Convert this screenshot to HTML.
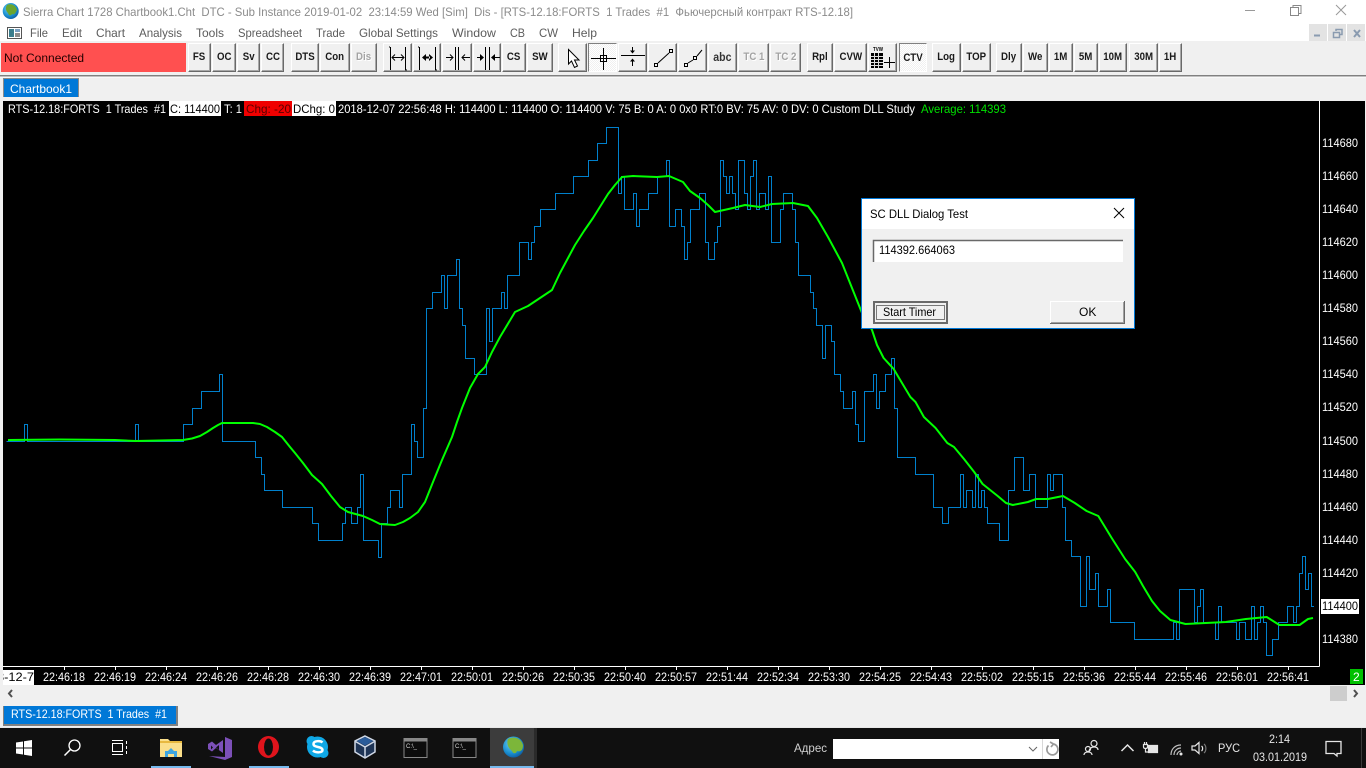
<!DOCTYPE html>
<html><head><meta charset="utf-8"><title>Sierra Chart</title>
<style>
html,body{margin:0;padding:0;width:1366px;height:768px;overflow:hidden;background:#f0f0f0}
.b{position:absolute;top:43px;height:29px;box-sizing:border-box;background:#f0f0f0;border:1px solid;border-color:#fff #696969 #696969 #fff;box-shadow:inset -1px -1px 0 #a8a8a8;font:bold 11px "Liberation Sans",sans-serif;text-align:center;line-height:27px;color:#1a1a1a;white-space:nowrap;overflow:hidden}
.b span{display:inline-block;transform:scaleX(.88)}
.d{color:#a3a3a3;text-shadow:1px 1px 0 #fff}
.p{background-color:#fafafa;border-color:#808080 #fff #fff #808080;box-shadow:none;background-image:repeating-conic-gradient(#f0f0f0 0 25%,#fff 0 50%);background-size:2px 2px}
svg{position:absolute;left:0;top:0}
text{font-family:"Liberation Sans","Noto Sans CJK JP",sans-serif;font-size:12px;white-space:pre}
</style></head><body>
<div class="b" style="left:188px;width:23px"><span>FS</span></div>
<div class="b" style="left:212px;width:24px"><span>OC</span></div>
<div class="b" style="left:237px;width:23px"><span>Sv</span></div>
<div class="b" style="left:261px;width:23px"><span>CC</span></div>
<div class="b" style="left:291px;width:28px"><span>DTS</span></div>
<div class="b" style="left:320px;width:30px"><span>Con</span></div>
<div class="b d" style="left:351px;width:26px"><span>Dis</span></div>
<div class="b" style="left:383px;width:29px"></div>
<div class="b" style="left:413px;width:28px"></div>
<div class="b" style="left:442px;width:30px"></div>
<div class="b" style="left:473px;width:28px"></div>
<div class="b" style="left:502px;width:24px"><span>CS</span></div>
<div class="b" style="left:527px;width:26px"><span>SW</span></div>
<div class="b" style="left:558px;width:29px"></div>
<div class="b p" style="left:588px;width:29px"></div>
<div class="b" style="left:618px;width:29px"></div>
<div class="b" style="left:648px;width:29px"></div>
<div class="b" style="left:678px;width:29px"></div>
<div class="b" style="left:708px;width:29px;font-size:12px;font-weight:normal;color:#333"><span style="font-weight:bold">abc</span></div>
<div class="b d" style="left:738px;width:31px"><span>TC 1</span></div>
<div class="b d" style="left:770px;width:31px"><span>TC 2</span></div>
<div class="b" style="left:807px;width:26px"><span>Rpl</span></div>
<div class="b" style="left:834px;width:33px"><span>CVW</span></div>
<div class="b" style="left:868px;width:29px"></div>
<div class="b p" style="left:899px;width:28px;line-height:29px"><span>CTV</span></div>
<div class="b" style="left:932px;width:29px"><span>Log</span></div>
<div class="b" style="left:962px;width:29px"><span>TOP</span></div>
<div class="b" style="left:996px;width:26px"><span>Dly</span></div>
<div class="b" style="left:1023px;width:25px"><span>We</span></div>
<div class="b" style="left:1049px;width:24px"><span>1M</span></div>
<div class="b" style="left:1074px;width:24px"><span>5M</span></div>
<div class="b" style="left:1099px;width:28px"><span>10M</span></div>
<div class="b" style="left:1129px;width:29px"><span>30M</span></div>
<div class="b" style="left:1159px;width:23px"><span>1H</span></div>

<svg width="1366" height="768" viewBox="0 0 1366 768" xmlns="http://www.w3.org/2000/svg">
<defs>
<radialGradient id="gl" cx=".4" cy=".35" r=".75"><stop offset="0" stop-color="#6fd0f0"/><stop offset=".6" stop-color="#1a8fd0"/><stop offset="1" stop-color="#0b4f96"/></radialGradient>
</defs>
<!-- title + menu -->
<rect x="0" y="0" width="1366" height="41" fill="#fff"/>
<circle cx="10.7" cy="11" r="8" fill="url(#gl)"/>
<path d="M7 5c4-2 9 0 10 5-2 4-3 5-5 4-1 2-3 2-4-1-2-2-3-5-1-8z" fill="#6aa52e"/>
<text x="23" y="16" fill="#8b8b8b" textLength="830" lengthAdjust="spacingAndGlyphs">Sierra Chart 1728 Chartbook1.Cht  DTC - Sub Instance 2019-01-02  23:14:59 Wed [Sim]  Dis - [RTS-12.18:FORTS  1 Trades  #1  Фьючерсный контракт RTS-12.18]</text>
<path d="M1245 10.500H1255" stroke="#999" fill="none"/>
<path d="M1290.500 7.500h8v8h-8zM1293 7.500V5.500h8v8h-2.500" stroke="#888" fill="none"/>
<path d="M1336 5l10 10M1346 5l-10 10" stroke="#999" fill="none"/>
<rect x="7.500" y="27.500" width="14" height="11" fill="#fff" stroke="#555"/>
<rect x="9" y="29" width="5" height="8" fill="#3a7d8c"/><rect x="15" y="29" width="5" height="3" fill="#7a9fc0"/><rect x="15" y="33" width="5" height="4" fill="#8c8c8c"/>
<g fill="#5c5c5c">
<text x="30" y="37" textLength="18" lengthAdjust="spacingAndGlyphs">File</text>
<text x="62" y="37" textLength="20" lengthAdjust="spacingAndGlyphs">Edit</text>
<text x="96" y="37" textLength="29" lengthAdjust="spacingAndGlyphs">Chart</text>
<text x="139" y="37" textLength="43" lengthAdjust="spacingAndGlyphs">Analysis</text>
<text x="196" y="37" textLength="28" lengthAdjust="spacingAndGlyphs">Tools</text>
<text x="238" y="37" textLength="64" lengthAdjust="spacingAndGlyphs">Spreadsheet</text>
<text x="316" y="37" textLength="29" lengthAdjust="spacingAndGlyphs">Trade</text>
<text x="359" y="37" textLength="79" lengthAdjust="spacingAndGlyphs">Global Settings</text>
<text x="452" y="37" textLength="44" lengthAdjust="spacingAndGlyphs">Window</text>
<text x="510" y="37" textLength="15" lengthAdjust="spacingAndGlyphs">CB</text>
<text x="539" y="37" textLength="19" lengthAdjust="spacingAndGlyphs">CW</text>
<text x="572" y="37" textLength="25" lengthAdjust="spacingAndGlyphs">Help</text>
</g>
<rect x="1309" y="24" width="18" height="17" fill="#e3e3e3"/><rect x="1328" y="24" width="18" height="17" fill="#e3e3e3"/><rect x="1347" y="24" width="18" height="17" fill="#e3e3e3"/>
<path d="M1314 35.500h6" stroke="#8a9bb0" stroke-width="2" fill="none"/>
<path d="M1333.500 32.500h6v5h-6zM1336 31v-1.500h6v5h-2" stroke="#8a9bb0" stroke-width="1.500" fill="none"/>
<path d="M1354 30l6 7M1360 30l-6 7" stroke="#8a9bb0" stroke-width="2" fill="none"/>
<!-- status -->
<rect x="1" y="43" width="185" height="29" fill="#ff5050"/>
<text x="4" y="62" fill="#200">Not Connected</text>
<!-- toolbar icons -->
<g stroke="#000" fill="none" shape-rendering="crispEdges">
<path d="M390.500 47V70M389 47h1M405.500 47V70M405 70h2M392 57.500H404"/>
<path d="M419.500 47V70M418 47h1M435.500 47V70M435 70h2"/>
<path d="M446 57.500h7M455.500 47V70M458.500 47V70M462 57.500h8"/>
<path d="M477 57.500h6M485.500 47V70M489.500 47V70M493 57.500h7"/>
<path d="M591 58.500H616M603.500 48V70" />
<rect x="600.500" y="55.500" width="6" height="6"/>
<path d="M621 55.500H645M632.500 47V53M632.500 59V66"/>
</g>
<g fill="none" stroke="#000">
<path d="M395 54.500l-3 3 3 3M401 54.500l3 3-3 3"/>
<path d="M450 54.500l3 3-3 3M465 54.500l-3 3 3 3"/>
</g>
<g fill="#000">
<path d="M422 57.500l4-3.500v7zM433 57.500l-4-3.500v7zM425 56.500h5v2h-5z"/>
<path d="M484 57.500l-4-3.500v7zM491 57.500l4-3.500v7z"/>
<path d="M632.500 53.500l-2.500-3h5zM632.500 58.500l-2.500 3h5z"/>
</g>
<path d="M568.500 49.500V64l3-3 3 6.500 3-1.500-3-6h4.500z" fill="#fff" stroke="#000"/>
<g fill="none" stroke="#000" shape-rendering="geometricPrecision">
<rect x="654.500" y="63.500" width="3" height="3"/><rect x="669.500" y="49.500" width="3" height="3"/><path d="M658 63l11-10"/>
<rect x="684.500" y="63.500" width="3" height="3"/><rect x="693.500" y="56.500" width="3" height="3"/><path d="M688 63l5-3M697 56l5-6"/>
</g>
<!-- TVW icon -->
<text x="873" y="51" style="font-size:5.500px;font-weight:bold" fill="#000" textLength="10" lengthAdjust="spacingAndGlyphs">TVW</text>
<rect x="871" y="53" width="12" height="15" fill="#000"/>
<path d="M871 56.500h12M871 59.500h12M871 62.500h12M871 65.500h12M874.500 53v15M878.500 53v15" stroke="#ddd" shape-rendering="crispEdges"/>
<path d="M884 62.500h11M889.500 57v11" stroke="#000" shape-rendering="crispEdges"/>
<!-- toolbar divider -->
<rect x="0" y="75" width="1366" height="1.500" fill="#808080"/>
<rect x="0" y="76.500" width="1366" height="1" fill="#fff"/>
<!-- tab -->
<rect x="3" y="78" width="76" height="19" fill="#8a8a8a"/>
<rect x="4" y="79" width="74" height="18" fill="#0078d7"/>
<text x="10" y="93" fill="#fff" textLength="62" lengthAdjust="spacingAndGlyphs">Chartbook1</text>
<!-- chart -->
<rect x="0" y="98" width="3" height="590" fill="#f0f0f0"/>
<rect x="3" y="101" width="1362" height="585" fill="#000"/>
<path d="M1319.500 101V666.500M3 666.500H1319.500" stroke="#fff" shape-rendering="crispEdges" fill="none"/>
<path stroke="#fff" shape-rendering="crispEdges" fill="none" d="M64.500 667v3M115.500 667v3M166.500 667v3M217.500 667v3M268.500 667v3M319.500 667v3M370.500 667v3M421.500 667v3M472.500 667v3M523.500 667v3M574.500 667v3M625.500 667v3M676.500 667v3M727.500 667v3M778.500 667v3M829.500 667v3M880.500 667v3M931.500 667v3M982.500 667v3M1033.500 667v3M1084.500 667v3M1135.500 667v3M1186.500 667v3M1237.500 667v3M1288.500 667v3"/>
<path fill="none" stroke="#0080cc" stroke-width="1" shape-rendering="crispEdges" d="M6.500 441.500H24.500V424.500H27.500V441.500H135.500V424.500H138.500V441.500H183.500V424.500H192.500V408.500H201.500V391.500H219.500V374.500H222.500V441.500H255.500V457.500H261.500V474.500H264.500V490.500H282.500V507.500H312.500V523.500H318.500V540.500H342.500V523.500H345.500V507.500H351.500V523.500H357.500V507.500H360.500V474.500H363.500V540.500H378.500V557.500H381.500V523.500H387.500V507.500H390.500V490.500H399.500V507.500H402.500V474.500H411.500V424.500H414.500V441.500H417.500V457.500H423.500V408.500H426.500V308.500H432.500V292.500H441.500V275.500H444.500V308.500H447.500V275.500H456.500V259.500H459.500V308.500H462.500V325.500H465.500V358.500H474.500V374.500H486.500V308.500H489.500V341.500H492.500V308.500H501.500V292.500H504.500V308.500H507.500V275.500H519.500V242.500H528.500V259.500H531.500V242.500H534.500V226.500H540.500V209.500H555.500V193.500H573.500V176.500H588.500V160.500H597.500V143.500H606.500V127.500H618.500V193.500H621.500V176.500H624.500V209.500H633.500V193.500H636.500V226.500H639.500V209.500H648.500V193.500H657.500V176.500H666.500V160.500H669.500V226.500H675.500V209.500H681.500V226.500H684.500V259.500H687.500V242.500H690.500V209.500H699.500V193.500H705.500V242.500H708.500V259.500H714.500V242.500H717.500V226.500H720.500V160.500H723.500V176.500H726.500V193.500H729.500V176.500H732.500V193.500H735.500V209.500H738.500V160.500H744.500V193.500H747.500V209.500H750.500V176.500H753.500V160.500H756.500V209.500H759.500V193.500H765.500V209.500H768.500V176.500H771.500V242.500H780.500V209.500H783.500V193.500H792.500V209.500H795.500V242.500H798.500V275.500H810.500V292.500H813.500V308.500H816.500V325.500H822.500V358.500H825.500V325.500H831.500V341.500H834.500V374.500H840.500V391.500H843.500V408.500H852.500V391.500H855.500V424.500H858.500V441.500H864.500V391.500H873.500V374.500H876.500V408.500H879.500V391.500H885.500V374.500H891.500V358.500H894.500V408.500H897.500V457.500H915.500V474.500H933.500V507.500H942.500V523.500H948.500V507.500H960.500V474.500H963.500V507.500H966.500V490.500H972.500V507.500H975.500V474.500H978.500V507.500H981.500V490.500H984.500V507.500H987.500V523.500H999.500V540.500H1008.500V490.500H1014.500V457.500H1023.500V490.500H1029.500V474.500H1035.500V507.500H1047.500V474.500H1050.500V490.500H1053.500V474.500H1062.500V507.500H1065.500V540.500H1071.500V556.500H1080.500V606.500H1086.500V556.500H1089.500V589.500H1095.500V573.500H1098.500V606.500H1107.500V589.500H1110.500V622.500H1134.500V639.500H1173.500V622.500H1176.500V639.500H1179.500V589.500H1194.500V622.500H1197.500V606.500H1200.500V589.500H1203.500V622.500H1215.500V639.500H1218.500V606.500H1221.500V622.500H1236.500V639.500H1239.500V622.500H1245.500V639.500H1251.500V606.500H1254.500V639.500H1257.500V622.500H1260.500V606.500H1263.500V622.500H1266.500V655.500H1272.500V639.500H1278.500V622.500H1287.500V606.500H1293.500V622.500H1296.500V606.500H1299.500V573.500H1302.500V556.500H1305.500V589.500H1308.500V573.500H1311.500V606.500H1314"/>
<polyline fill="none" stroke="#00ff00" stroke-width="2" stroke-linejoin="round" points="8,440 60,439.500 115,440 136,441 183,440 192,438.500 200,436 207,432 213,428 218,425 222,423 253,423 260,424 267,427 275,432 282,437 290,447 295,453 303,463 312,475 322,484 331,496 340,507 348,512 363,516 372,520 380,524 395,525 403,522 410,518 418,512 425,502 429,492 433,482 442,460 452,437 457,422 462,408 470,388 478,374 485,367 492,352 500,337 515,312 528,306 540,298 552,290 560,273 575,245 584,231 593,218 608,194 615,185 622,177 633,176 657,177 669,176 683,182 690,191 700,198 708,205 715,212 733,208 745,205 760,207 772,204 793,203 808,206 817,218 828,237 835,250 842,263 852,288 862,313 872,330 877,345 883.600,358 893.700,369 902,383 910.400,397 915.500,402 923.900,417 935.600,428 947.300,443 954,447 964,459 974.200,472 982.600,484 997.700,496 1006,503 1012.800,505 1027.900,502 1036.200,499 1048,499 1063,496 1074.800,503 1086.600,511 1098.300,516 1105,527 1111.700,538 1125.100,559 1135.200,572 1143,586 1152,601 1160,611 1170.400,620 1185.500,624 1225.800,622 1245.900,619 1266.700,617 1279.400,625 1299.600,625 1308,619 1313,618"/>
<!-- status row -->
<rect x="169" y="101" width="52" height="15" fill="#fff"/><rect x="244" y="101" width="48" height="15" fill="#f00000"/><rect x="292" y="101" width="44" height="15" fill="#fff"/>
<text x="8" y="113" fill="#fff" textLength="158" lengthAdjust="spacingAndGlyphs">RTS-12.18:FORTS  1 Trades  #1</text>
<text x="170" y="113" fill="#000" textLength="50" lengthAdjust="spacingAndGlyphs">C: 114400</text>
<text x="224" y="113" fill="#fff" textLength="18" lengthAdjust="spacingAndGlyphs">T: 1</text>
<text x="246" y="113" fill="#5a0000" textLength="45" lengthAdjust="spacingAndGlyphs">Chg: -20</text>
<text x="293" y="113" fill="#000" textLength="42" lengthAdjust="spacingAndGlyphs">DChg: 0</text>
<text x="338" y="113" fill="#fff" textLength="577" lengthAdjust="spacingAndGlyphs">2018-12-07 22:56:48 H: 114400 L: 114400 O: 114400 V: 75 B: 0 A: 0 0x0 RT:0 BV: 75 AV: 0 DV: 0 Custom DLL Study</text>
<text x="921" y="113" fill="#00e000" textLength="85" lengthAdjust="spacingAndGlyphs">Average: 114393</text>
<!-- price axis -->
<rect x="1321" y="599" width="38" height="15" fill="#fff"/>
<g fill="#fff">
<text x="1322" y="147" textLength="36" lengthAdjust="spacingAndGlyphs">114680</text>
<text x="1322" y="180" textLength="36" lengthAdjust="spacingAndGlyphs">114660</text>
<text x="1322" y="213" textLength="36" lengthAdjust="spacingAndGlyphs">114640</text>
<text x="1322" y="246" textLength="36" lengthAdjust="spacingAndGlyphs">114620</text>
<text x="1322" y="279" textLength="36" lengthAdjust="spacingAndGlyphs">114600</text>
<text x="1322" y="312" textLength="36" lengthAdjust="spacingAndGlyphs">114580</text>
<text x="1322" y="345" textLength="36" lengthAdjust="spacingAndGlyphs">114560</text>
<text x="1322" y="378" textLength="36" lengthAdjust="spacingAndGlyphs">114540</text>
<text x="1322" y="411" textLength="36" lengthAdjust="spacingAndGlyphs">114520</text>
<text x="1322" y="445" textLength="36" lengthAdjust="spacingAndGlyphs">114500</text>
<text x="1322" y="478" textLength="36" lengthAdjust="spacingAndGlyphs">114480</text>
<text x="1322" y="511" textLength="36" lengthAdjust="spacingAndGlyphs">114460</text>
<text x="1322" y="544" textLength="36" lengthAdjust="spacingAndGlyphs">114440</text>
<text x="1322" y="577" textLength="36" lengthAdjust="spacingAndGlyphs">114420</text>
<text x="1322" y="610" fill="#000" textLength="36" lengthAdjust="spacingAndGlyphs">114400</text>
<text x="1322" y="643" textLength="36" lengthAdjust="spacingAndGlyphs">114380</text>
</g>
<!-- time axis -->
<rect x="3" y="670" width="31" height="15" fill="#fff"/>
<text x="-3" y="681" fill="#000" textLength="37" lengthAdjust="spacingAndGlyphs">8-12-7</text>
<rect x="0" y="668" width="3" height="18" fill="#f0f0f0"/>
<g fill="#fff">
<text x="43" y="681" textLength="42" lengthAdjust="spacingAndGlyphs">22:46:18</text>
<text x="94" y="681" textLength="42" lengthAdjust="spacingAndGlyphs">22:46:19</text>
<text x="145" y="681" textLength="42" lengthAdjust="spacingAndGlyphs">22:46:24</text>
<text x="196" y="681" textLength="42" lengthAdjust="spacingAndGlyphs">22:46:26</text>
<text x="247" y="681" textLength="42" lengthAdjust="spacingAndGlyphs">22:46:28</text>
<text x="298" y="681" textLength="42" lengthAdjust="spacingAndGlyphs">22:46:30</text>
<text x="349" y="681" textLength="42" lengthAdjust="spacingAndGlyphs">22:46:39</text>
<text x="400" y="681" textLength="42" lengthAdjust="spacingAndGlyphs">22:47:01</text>
<text x="451" y="681" textLength="42" lengthAdjust="spacingAndGlyphs">22:50:01</text>
<text x="502" y="681" textLength="42" lengthAdjust="spacingAndGlyphs">22:50:26</text>
<text x="553" y="681" textLength="42" lengthAdjust="spacingAndGlyphs">22:50:35</text>
<text x="604" y="681" textLength="42" lengthAdjust="spacingAndGlyphs">22:50:40</text>
<text x="655" y="681" textLength="42" lengthAdjust="spacingAndGlyphs">22:50:57</text>
<text x="706" y="681" textLength="42" lengthAdjust="spacingAndGlyphs">22:51:44</text>
<text x="757" y="681" textLength="42" lengthAdjust="spacingAndGlyphs">22:52:34</text>
<text x="808" y="681" textLength="42" lengthAdjust="spacingAndGlyphs">22:53:30</text>
<text x="859" y="681" textLength="42" lengthAdjust="spacingAndGlyphs">22:54:25</text>
<text x="910" y="681" textLength="42" lengthAdjust="spacingAndGlyphs">22:54:43</text>
<text x="961" y="681" textLength="42" lengthAdjust="spacingAndGlyphs">22:55:02</text>
<text x="1012" y="681" textLength="42" lengthAdjust="spacingAndGlyphs">22:55:15</text>
<text x="1063" y="681" textLength="42" lengthAdjust="spacingAndGlyphs">22:55:36</text>
<text x="1114" y="681" textLength="42" lengthAdjust="spacingAndGlyphs">22:55:44</text>
<text x="1165" y="681" textLength="42" lengthAdjust="spacingAndGlyphs">22:55:46</text>
<text x="1216" y="681" textLength="42" lengthAdjust="spacingAndGlyphs">22:56:01</text>
<text x="1267" y="681" textLength="42" lengthAdjust="spacingAndGlyphs">22:56:41</text>
</g>
<rect x="1350" y="669" width="13" height="15" fill="#00c000"/>
<text x="1353" y="681" fill="#fff">2</text>
<!-- lower area -->
<rect x="0" y="685" width="1366" height="43" fill="#f0f0f0"/>
<path d="M12 690l-3 3.500 3 3.500" stroke="#505050" stroke-width="2" fill="none"/>
<rect x="1330" y="686" width="17" height="15" fill="#cdcdcd"/>
<path d="M1354 690l3 3.500-3 3.500" stroke="#505050" stroke-width="2" fill="none"/>
<rect x="3" y="706" width="175" height="20" fill="#808080"/>
<rect x="4" y="706" width="172" height="18" fill="#0078d7"/>
<text x="11" y="718" fill="#fff" textLength="156" lengthAdjust="spacingAndGlyphs">RTS-12.18:FORTS  1 Trades  #1</text>
<!-- dialog -->
<rect x="861.500" y="198.500" width="273" height="130" fill="#f0f0f0" stroke="#0078d7"/>
<rect x="862" y="199" width="272" height="30" fill="#fff"/>
<text x="870" y="218" fill="#000" textLength="98" lengthAdjust="spacingAndGlyphs">SC DLL Dialog Test</text>
<path d="M1114 208l10 10M1124 208l-10 10" stroke="#000" fill="none"/>
<rect x="873" y="240" width="250" height="22" fill="#fff"/>
<path d="M873.500 262V240.500H1123" stroke="#696969" stroke-width="1.500" fill="none"/>
<text x="879" y="254" fill="#000" textLength="76" lengthAdjust="spacingAndGlyphs">114392.664063</text>
<rect x="873" y="301" width="75" height="23" fill="#696969"/>
<rect x="875" y="303" width="71" height="19" fill="#f0f0f0"/>
<rect x="876.500" y="305.500" width="68" height="14" fill="none" stroke="#000" stroke-dasharray="1 1"/>
<text x="883" y="316" fill="#000" textLength="53" lengthAdjust="spacingAndGlyphs">Start Timer</text>
<rect x="1050" y="301" width="75" height="23" fill="#696969"/>
<rect x="1050" y="301" width="74" height="22" fill="#fff"/>
<rect x="1051" y="302" width="73" height="21" fill="#a0a0a0"/>
<rect x="1051" y="302" width="72" height="20" fill="#f0f0f0"/>
<text x="1079" y="316" fill="#000">OK</text>
<!-- taskbar -->
<rect x="0" y="727" width="1366" height="1" fill="#e8e8e8"/>
<rect x="0" y="728" width="1366" height="40" fill="#101010"/>
<path d="M16 742.500l7-1V747.500h-7zM24 741.300l8-1.300V747.500h-8zM16 748.500h7v6l-7-1zM24 748.500h8V756l-8-1.300z" fill="#fff"/>
<circle cx="74.500" cy="745.500" r="5.500" fill="none" stroke="#fff" stroke-width="1.300"/>
<path d="M70.500 749.500L64.500 755.500" stroke="#fff" stroke-width="1.500"/>
<path d="M112.500 743.500h10v8h-10zM112 740.500h11M112 754.500h11M126.500 741v3M126.500 746v3M126.500 751v3" stroke="#fff" fill="none"/>
<rect x="151" y="766" width="40" height="2" fill="#76b9ed"/>
<path d="M160 739h8l2 2h12v16h-22z" fill="#fbdf8a"/><rect x="160" y="741" width="22" height="2" fill="#e8b93f"/>
<path d="M165 757v-6h3l3-3 3 3h3v6h-3v-3h-6v3z" fill="#3fa6e0"/>
<path d="M225 737l7 3v17l-7 3-16-4 16 1z" fill="#7c50b8"/>
<path d="M208 744l4-2.500 4 3.500 7-5v13l-7-5-4 3.500-4-2.500zM211 745.500v4l2-2zM219 745l-3 2.500 3 2.500z" fill="#7c50b8" fill-rule="evenodd"/>
<rect x="249" y="766" width="40" height="2" fill="#76b9ed"/>
<ellipse cx="268.500" cy="747" rx="10.500" ry="11" fill="#e0141c"/>
<ellipse cx="268.500" cy="747" rx="4.500" ry="8.500" fill="#101010"/>
<circle cx="317.500" cy="747" r="10.500" fill="#0fa8e6"/>
<circle cx="311.500" cy="741" r="5" fill="#0fa8e6"/><circle cx="323.500" cy="753" r="5" fill="#0fa8e6"/>
<path d="M322.500 742.500c-2-2-9-2-9 1.500 0 4 9 2 9 6 0 3-7 3-9.500 .5" fill="none" stroke="#fff" stroke-width="2.500"/>
<path d="M365 736l10 5v11l-10 6-10-6v-11z" fill="#1f3556" stroke="#cfd8e6" stroke-width="1.500"/>
<path d="M365 747v10M355.500 741.500l9.500 5.500 9.500-5.500" stroke="#cfd8e6" stroke-width="1.500" fill="none"/>
<path d="M365 737l8 4-8 4.500-8-4.500z" fill="#2a5c9a"/>
<g>
<rect x="404" y="738.500" width="23" height="19" fill="#0c0c0c" stroke="#888"/><rect x="404" y="738.500" width="23" height="3" fill="#888"/>
<text x="406" y="748" fill="#d8d8d8" style="font-size:6px">C:\_</text>
<rect x="453" y="738.500" width="23" height="19" fill="#0c0c0c" stroke="#888"/><rect x="453" y="738.500" width="23" height="3" fill="#888"/>
<text x="455" y="748" fill="#d8d8d8" style="font-size:6px">C:\_</text>
</g>
<rect x="490" y="728" width="44" height="40" fill="#3c3c3c"/><rect x="534" y="728" width="3" height="40" fill="#2a2a2a"/>
<rect x="490" y="766" width="44" height="2" fill="#76b9ed"/>
<circle cx="513.500" cy="747" r="10.500" fill="url(#gl)"/>
<path d="M508 739c6-3 13-1 15 6 0 6-3 7-6 6-1 3-4 3-5 0-3-2-6-7-4-12z" fill="#7cb63a"/>
<text x="794" y="752" fill="#d0d0d0" textLength="33" lengthAdjust="spacingAndGlyphs">Адрес</text>
<rect x="833" y="739" width="226" height="20" fill="#fff"/>
<rect x="1042" y="739" width="1" height="20" fill="#d8d8d8"/>
<path d="M1029 747l4 4 4-4" stroke="#666" fill="none"/>
<path d="M1048.500 745.500a5.500 5.500 0 1 0 5-1.500M1050 742l3.500 2-2.500 3" stroke="#9a9a9a" stroke-width="1.700" fill="none"/>
<g fill="none" stroke="#e6e6e6" stroke-width="1.200">
<circle cx="1094" cy="743.500" r="3"/><path d="M1089 752c0-3 2-5 5-5s4 1 4 3"/>
<circle cx="1088" cy="749" r="2.500"/><path d="M1084 755c0-2 2-3 4-3s4 1 4 3"/>
<path d="M1121.500 751l6-6 6 6" stroke-width="1.500"/>
<path d="M1148.500 745.500h9v7h-9zM1143.500 744.500h4v2.500c0 2-4 2-4 0zM1144.500 744.500v-2.500M1146.500 744.500v-2.500M1145.500 749v3h3"/>
<path d="M1171 755c0-6 4-10 10-10M1174 755c0-4 3-7 7-7M1177 755c0-2 2-4 4-4" stroke="#c0c0c0"/>
<path d="M1192 746h3l4-3.500v11l-4-3.500h-3zM1201.500 746c1.500 1 1.500 4 0 5"/>
<path d="M1204 744c2.500 2 2.500 7 0 9" stroke="#777"/>
<path d="M1326 741.500h15v12h-4v2.500l-3-2.500h-8z" stroke-width="1.300"/>
</g>
<rect x="1148" y="746" width="9" height="6" fill="#e6e6e6"/>
<circle cx="1181" cy="754" r="1.500" fill="#e6e6e6"/>
<text x="1218" y="752" fill="#e6e6e6" textLength="22" lengthAdjust="spacingAndGlyphs">РУС</text>
<text x="1269" y="743" fill="#e6e6e6" textLength="21" lengthAdjust="spacingAndGlyphs">2:14</text>
<text x="1253" y="761" fill="#e6e6e6" textLength="54" lengthAdjust="spacingAndGlyphs">03.01.2019</text>
<rect x="1361" y="728" width="1" height="40" fill="#3a3a3a"/>
</svg>
</body></html>
